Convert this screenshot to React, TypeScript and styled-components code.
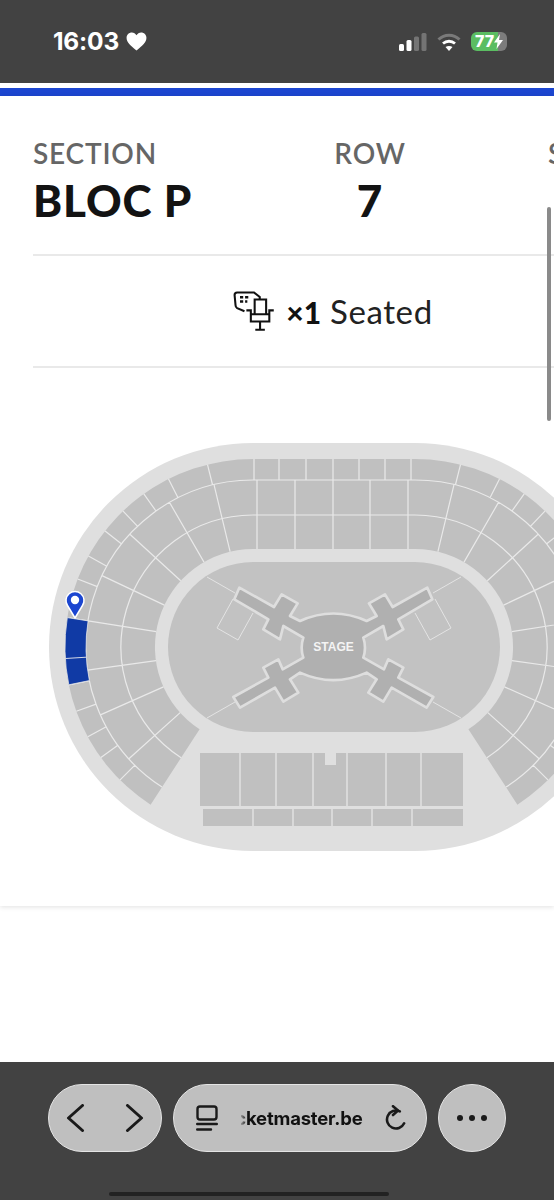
import React from "react";
import styled, { createGlobalStyle } from "styled-components";

const Global = createGlobalStyle`
  html, body { margin: 0; padding: 0; background: #fff; }
  body { font-family: "Lato", "Liberation Sans", sans-serif; }
`;

const Page = styled.div`
  position: relative;
  width: 554px;
  height: 1200px;
  overflow: hidden;
  display: flex;
  flex-direction: column;
  background: #fff;
`;

const StatusBar = styled.header`
  height: 83px;
  flex: none;
  background: #424242;
  display: flex;
  align-items: flex-start;
  justify-content: space-between;
  padding: 30px 47px 0 53px;
  box-sizing: border-box;
  color: #fff;
`;
const TimeGroup = styled.div`
  display: flex;
  align-items: center;
  gap: 7px;
`;
const Time = styled.span`
  font: 700 24.5px/23px "Inter", "Liberation Sans", sans-serif;
  letter-spacing: -0.2px;
`;
const StatusIcons = styled.div`
  display: flex;
  align-items: center;
  gap: 10px;
  height: 23px;
`;
const Battery = styled.div`
  position: relative;
  width: 36px;
  height: 19px;
  border-radius: 6px;
  overflow: hidden;
  background: linear-gradient(90deg, #5bbd62 0 76%, #7c7c7c 76% 100%);
  display: flex;
  align-items: center;
  padding-left: 4px;
  box-sizing: border-box;
`;
const BatteryText = styled.span`
  font: 800 16px/19px "Inter", "Liberation Sans", sans-serif;
  color: #fff;
`;
const BlueStripe = styled.div`
  height: 8px;
  flex: none;
  margin-top: 5px;
  background: #1c46d0;
`;
const Card = styled.main`
  height: 810px;
  flex: none;
  background: #fff;
  box-shadow: 0 1px 5px rgba(0, 0, 0, 0.12);
`;
const InfoRow = styled.section`
  display: flex;
  height: 160px;
  box-sizing: border-box;
  margin-left: 33px;
  padding-top: 42px;
  border-bottom: 2px solid #e9e9e9;
  overflow: hidden;
`;
const InfoColumn = styled.div<{ $width: number; $center?: boolean }>`
  flex: none;
  width: ${(p) => p.$width}px;
  text-align: ${(p) => (p.$center ? "center" : "left")};
`;
const InfoLabel = styled.div`
  font-size: 28px;
  line-height: 31px;
  font-weight: 600;
  letter-spacing: 0.8px;
  color: #666;
`;
const InfoValue = styled.div`
  margin-top: 7px;
  font-size: 44px;
  line-height: 48px;
  font-weight: 900;
  letter-spacing: 0.9px;
  color: #131313;
`;
const TicketRow = styled.section`
  display: flex;
  align-items: center;
  justify-content: center;
  gap: 10px;
  height: 112px;
  box-sizing: border-box;
  margin-left: 33px;
  padding-left: 79px;
  border-bottom: 2px solid #e9e9e9;
  font-size: 33px;
  color: #222;
`;
const TicketText = styled.span`
  display: flex;
  align-items: baseline;
  gap: 9px;
  line-height: 36px;
  letter-spacing: 0.6px;
`;
const Bold = styled.b`
  font-size: 30px;
  letter-spacing: 0;
  font-weight: 900;
  color: #111;
`;
const MapSvg = styled.svg`
  display: block;
  margin-top: 63px;
`;
const Scrollbar = styled.div`
  position: absolute;
  right: 3px;
  top: 207px;
  width: 4px;
  height: 214px;
  border-radius: 2px;
  background: #8a8a8a;
`;
const Toolbar = styled.footer`
  margin-top: auto;
  height: 138px;
  flex: none;
  box-sizing: border-box;
  background: #424242;
  padding: 22px 48px 0;
  display: flex;
  align-items: flex-start;
  gap: 11px;
`;
const Pill = styled.div<{ $width: number; $justify?: string }>`
  width: ${(p) => p.$width}px;
  height: 68px;
  flex: none;
  box-sizing: border-box;
  border-radius: 34px;
  background: #bfbfbf;
  border: 1px solid #e4e4e4;
  display: flex;
  align-items: center;
  justify-content: ${(p) => p.$justify ?? "space-between"};
`;
const BackForward = styled(Pill)`
  padding: 0 17px 0 17px;
`;
const Address = styled(Pill)`
  padding: 0 19px 0 22px;
`;
const UrlClip = styled.div`
  width: 122px;
  overflow: hidden;
  display: flex;
  justify-content: flex-end;
  -webkit-mask-image: linear-gradient(90deg, rgba(0,0,0,.25) 0, #000 6px);
  mask-image: linear-gradient(90deg, rgba(0,0,0,.25) 0, #000 6px);
`;
const Url = styled.span`
  font: 700 18.5px/24px "Inter", "Liberation Sans", sans-serif;
  letter-spacing: -0.2px;
  color: #111;
  white-space: nowrap;
`;
const HomeBar = styled.div`
  position: absolute;
  left: 109px;
  top: 1192px;
  width: 280px;
  height: 4px;
  border-radius: 2px;
  background: #222;
`;

const CY = 646;
const CL = 253;
const CR = 415;
const rad = (d: number) => (d * Math.PI) / 180;
const pt = (side: 1 | -1, r: number, t: number) => {
  const c = side < 0 ? CL : CR;
  return [c + side * r * Math.sin(rad(t)), CY - r * Math.cos(rad(t))]
    .map((v) => v.toFixed(1))
    .join(" ");
};
const arc = (side: 1 | -1, r: number, a: number, b: number, move = true) => {
  const sweep = (side < 0 ? b < a : b > a) ? 1 : 0;
  return `${move ? `M${pt(side, r, a)}` : `L${pt(side, r, a)}`}A${r} ${r} 0 0 ${sweep} ${pt(side, r, b)}`;
};
const radial = (side: 1 | -1, t: number, r1: number, r2: number) =>
  `M${pt(side, r1, t)}L${pt(side, r2, t)}`;

const END = 147;
const seatRegion = [
  `M${pt(-1, 188, END)}`,
  arc(-1, 188, END, 0, false),
  arc(1, 188, 0, END, false),
  arc(1, 98, END, 0, false),
  arc(-1, 98, 0, END, false),
  "Z",
].join("");

const OUTER = [14, 26.7, 35.5, 43.7, 51.9, 61.1, 68.8, 81, 93.5, 101.6, 110, 118.5, 126, 135];
const INNER = [13.5, 30, 47.5, 64.7, 81, 98, 114, 132];
const TOP_COLS = [254, 279, 306, 333, 359, 385, 411];
const MID_COLS = [257, 295, 333, 370, 408];

const seatLines = [
  ...(([-1, 1] as const).flatMap((s) => [
    arc(s, 167, 0, END),
    arc(s, 132, 0, END),
    ...OUTER.map((t) => radial(s, t, 167, 188)),
    ...INNER.map((t) => radial(s, t, 98, 167)),
  ])),
  `M${CL} 479H${CR}`,
  `M${CL} 514H${CR}`,
  ...TOP_COLS.map((x) => `M${x} 458V479`),
  ...MID_COLS.map((x) => `M${x} 479V548`),
].join("");

const blueCell = [
  `M${pt(-1, 188, 81)}`,
  arc(-1, 188, 81, 101.6, false),
  arc(-1, 167, 101.6, 81, false),
  "Z",
].join("");

const stadium = (r: number) =>
  `M${CL} ${CY - r}H${CR}A${r} ${r} 0 0 1 ${CR} ${CY + r}H${CL}A${r} ${r} 0 0 1 ${CL} ${CY - r}Z`;

const STAGE_PATH =
  "M300 150Q400 105 500 150L530 135L507 97L555 70L578 108L682 50L697 85L595 145L610 175L560 205L550 165L490 200Q500 230 490 260L552 295L565 265L610 290L595 320L700 378L680 410L575 350L550 392L505 365L530 325L500 305Q400 350 300 305L270 325L295 365L250 392L225 350L120 410L100 378L205 320L190 290L235 265L248 295L310 260Q300 230 310 200L250 165L240 205L190 175L205 145L103 85L118 50L222 108L245 70L293 97L270 135Z";

const TOP_BLOCKS = [240, 276, 313, 347, 386, 421];
const LOW_BLOCKS = [253, 293, 332, 372, 412];

function StadiumMap() {
  return (
    <MapSvg width={554} height={440} viewBox="0 430 554 440">
      <path d={stadium(204)} fill="#dfdfdf" />
      <path d={seatRegion} fill="#c0c0c0" />
      <path d={seatLines} fill="none" stroke="#e9e9e9" strokeWidth={1.2} />
      <path d={stadium(85)} fill="#c2c2c2" />
      <g stroke="#e4e4e4" strokeWidth={1} fill="none">
        <path d="M207 576L235 592M461 576L433 592M207 717L235 701M461 717L433 701" />
        <path d="M233 598L217 627L238 639L253 612M435 598L451 627L430 639L415 612" />
      </g>
      <g transform="translate(200 570) scale(.3333)">
        <path d={STAGE_PATH} fill="#b0b0b0" stroke="#dedede" strokeWidth={8} strokeLinejoin="round" />
      </g>
      <text x={333.5} y={650} textAnchor="middle" fontFamily="Liberation Sans" fontWeight={700} fontSize={12} fill="#f4f4f4">
        STAGE
      </text>
      <rect x={200} y={752} width={263} height={53} fill="#c0c0c0" />
      <rect x={325} y={752} width={11} height={12} fill="#dfdfdf" />
      <rect x={203} y={808} width={260} height={17} fill="#c0c0c0" />
      <path
        d={[...TOP_BLOCKS.map((x) => `M${x} 752V805`), ...LOW_BLOCKS.map((x) => `M${x} 808V825`)].join("")}
        stroke="#e9e9e9"
        strokeWidth={1.2}
      />
      <path d={blueCell} fill="#103aa5" stroke="#e3e3e3" strokeWidth={0.8} />
      <path d={radial(-1, 93.5, 167, 188)} stroke="#d5d9e8" strokeWidth={1} />
      <path
        d="M75 617L67.5 604.5A9 9 0 1 1 82.5 604.5Z"
        fill="#1c46d0"
        stroke="#fff"
        strokeWidth={1.5}
        strokeLinejoin="round"
      />
      <circle cx={75} cy={599} r={4.2} fill="#fff" />
    </MapSvg>
  );
}

function TicketIcon() {
  return (
    <svg width={43} height={44} viewBox="40 28 135 132" fill="none" stroke="#111" strokeWidth={6.5}>
      <path d="M76 95L53 85Q48 82 48 76L45 44Q45 36 53 36H106L124 50V56" />
      <path d="M62 47h10v8h-10zM78 47h10v8h-10zM62 60h10v8h-10zM78 60h7v8h-7z" fill="#111" stroke="none" />
      <path d="M108 104V58H144V104" />
      <path d="M82 92H96V127H154V92H168" />
      <path d="M96 104H154M125 127V152M110 153H140" />
    </svg>
  );
}

export default function App() {
  return (
    <Page>
      <Global />
      <StatusBar>
        <TimeGroup>
          <Time>16:03</Time>
          <svg width={21} height={19} viewBox="0 0 24 22">
            <path fill="#fff" d="M12 21.500C5 16 .5 12 .5 6.800.5 3 3.400.5 6.600.5c2.300 0 4.300 1.200 5.400 3.300C13.100 1.700 15.100.5 17.400.5c3.200 0 6.100 2.500 6.100 6.300C23.500 12 19 16 12 21.500Z" />
          </svg>
        </TimeGroup>
        <StatusIcons>
          <svg width={28} height={18} viewBox="0 0 28 18">
            <rect x={0} y={11} width={5} height={7} rx={1.5} fill="#fff" />
            <rect x={7.500} y={7} width={5} height={11} rx={1.5} fill="#fff" />
            <rect x={15} y={3.500} width={5} height={14.500} rx={1.5} fill="#747474" />
            <rect x={22.500} y={0} width={5} height={18} rx={1.5} fill="#747474" />
          </svg>
          <svg width={24} height={18} viewBox="0 0 24 18" fill="none">
            <path d="M1.500 6.500C7.500 .8 16.500 .8 22.500 6.500" stroke="#7a7a7a" strokeWidth={3} />
            <path d="M6 10.500C9.500 7.500 14.500 7.500 18 10.500" stroke="#fff" strokeWidth={2.800} />
            <path d="M12 18L8.500 14C10.500 12.500 13.500 12.500 15.500 14Z" fill="#fff" />
          </svg>
          <Battery>
            <BatteryText>77</BatteryText>
            <svg width={9} height={15} viewBox="0 0 9 15">
              <path d="M6 0L0 8.500H3.500L2.500 15L9 6H5Z" fill="#fff" />
            </svg>
          </Battery>
        </StatusIcons>
      </StatusBar>
      <BlueStripe />
      <Card>
        <InfoRow>
          <InfoColumn $width={271}>
            <InfoLabel>SECTION</InfoLabel>
            <InfoValue>BLOC P</InfoValue>
          </InfoColumn>
          <InfoColumn $width={132} $center>
            <InfoLabel>ROW</InfoLabel>
            <InfoValue>7</InfoValue>
          </InfoColumn>
          <InfoColumn $width={112} />
          <InfoColumn $width={60}>
            <InfoLabel>SEAT</InfoLabel>
          </InfoColumn>
        </InfoRow>
        <TicketRow>
          <TicketIcon />
          <TicketText>
            <Bold>×1</Bold>
            <span>Seated</span>
          </TicketText>
        </TicketRow>
        <StadiumMap />
      </Card>
      <Scrollbar />
      <Toolbar>
        <BackForward $width={114}>
          <svg width={20} height={28} viewBox="0 0 20 28" fill="none" stroke="#1a1a1a" strokeWidth={3} strokeLinecap="round" strokeLinejoin="round">
            <path d="M16.500 1.500L2.500 14L16.500 26.500" />
          </svg>
          <svg width={20} height={28} viewBox="0 0 20 28" fill="none" stroke="#1a1a1a" strokeWidth={3} strokeLinecap="round" strokeLinejoin="round">
            <path d="M3.500 1.500L17.500 14L3.500 26.500" />
          </svg>
        </BackForward>
        <Address $width={254}>
          <svg width={22} height={26} viewBox="0 0 22 26" fill="none" stroke="#1a1a1a" strokeWidth={2.400} strokeLinecap="round">
            <rect x={1.500} y={1.500} width={19} height={13} rx={2.500} />
            <path d="M1.200 19H20.800M1.200 24.500H15" />
          </svg>
          <UrlClip>
            <Url>ticketmaster.be</Url>
          </UrlClip>
          <svg width={22} height={26} viewBox="0 0 22 26" fill="none" stroke="#1a1a1a" strokeWidth={2.600} strokeLinecap="round" strokeLinejoin="round">
            <path d="M11 5.500A9 9 0 1 0 20 14.500" transform="rotate(25 11 14.500)" />
            <path d="M8 1.200L13 5.500L8 10" />
          </svg>
        </Address>
        <Pill $width={68} $justify="center">
          <svg width={30} height={6} viewBox="0 0 30 6" fill="#1a1a1a">
            <circle cx={3} cy={3} r={3} />
            <circle cx={15} cy={3} r={3} />
            <circle cx={27} cy={3} r={3} />
          </svg>
        </Pill>
      </Toolbar>
      <HomeBar />
    </Page>
  );
}
